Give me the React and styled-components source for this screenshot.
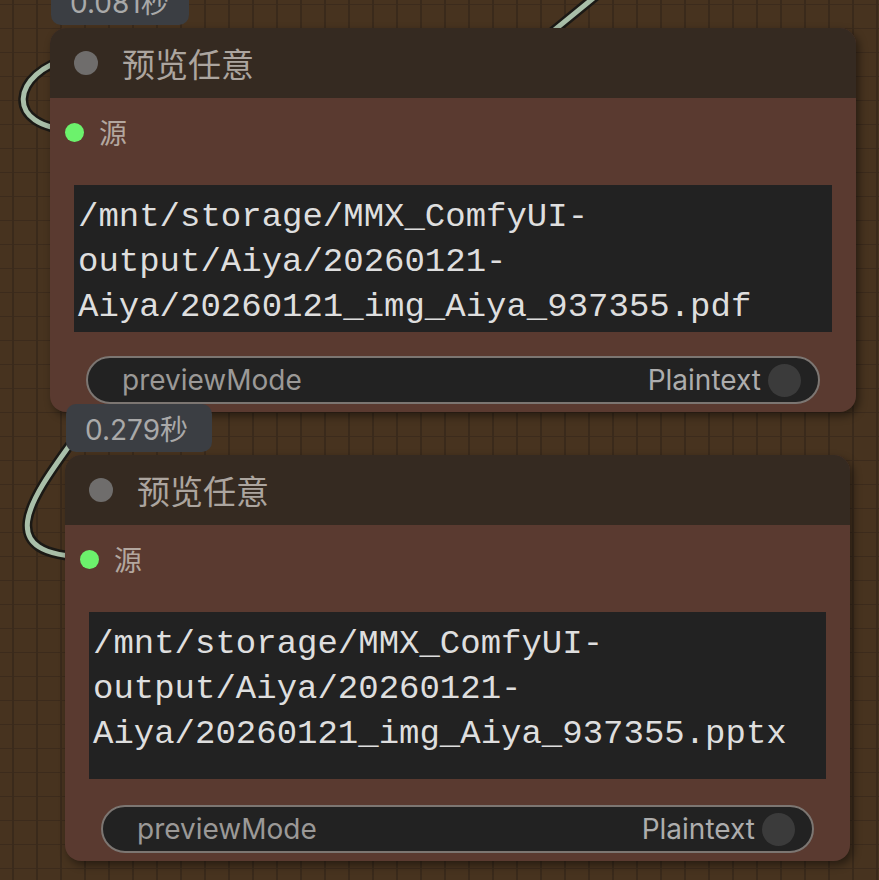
import styled, { createGlobalStyle } from 'styled-components';

const GlobalStyle = createGlobalStyle`
  html, body {
    margin: 0;
    padding: 0;
    background: #45311f;
  }
  * {
    box-sizing: border-box;
  }
`;

const Canvas = styled.div`
  position: relative;
  width: 879px;
  height: 880px;
  overflow: hidden;
  background-color: #47331f;
  background-image:
    linear-gradient(to right, #3a2a1b 2px, transparent 2px),
    linear-gradient(to bottom, #3c2b1c 1px, transparent 1px);
  background-size: 24px 24px;
  background-position: 12px 4px;
  font-family: Inter, "Noto Sans CJK SC", sans-serif;
`;

const Wires = styled.svg`
  position: absolute;
  left: 0;
  top: 0;
  width: 879px;
  height: 880px;
  overflow: visible;
`;

// nodes sit on a free canvas, so their place is the content
const Node = styled.div`
  position: absolute;
  left: ${(p) => p.x}px;
  top: ${(p) => p.y}px;
  width: ${(p) => p.w}px;
  display: flex;
  flex-direction: column;
  background: #5a3a30;
  border-radius: 16px;
  box-shadow: 3px 4px 8px rgba(0, 0, 0, 0.45);
  padding-bottom: 8px;
`;

const Badge = styled.div`
  position: absolute;
  left: ${(p) => p.dx}px;
  bottom: calc(100% + 3px);
  width: ${(p) => p.w}px;
  height: 48px;
  padding: 0 19px;
  display: flex;
  align-items: center;
  background: #3b3e43;
  border-radius: 10px;
  color: #a9a9a9;
  font-size: 28px;
`;

const TitleBar = styled.div`
  height: 70px;
  display: flex;
  align-items: center;
  gap: 24px;
  padding-left: 24px;
  background: #352a21;
  border-radius: 16px 16px 0 0;
  color: #aca59f;
  font-size: 33px;
`;

const Dot = styled.span`
  width: ${(p) => p.size}px;
  height: ${(p) => p.size}px;
  border-radius: 50%;
  background: ${(p) => p.color};
  flex: none;
`;

const SlotRow = styled.div`
  height: 68px;
  display: flex;
  align-items: center;
  gap: 15px;
  padding-left: 15px;
  color: #b3a79f;
  font-size: 28px;
`;

const TextBox = styled.div`
  margin: 19px 24px 0;
  height: ${(p) => p.h}px;
  padding: 10px 4px 0;
  background: #222222;
  color: #dedede;
  font-family: "Liberation Mono", monospace;
  font-size: 34px;
  line-height: 45px;
  white-space: pre;
  overflow: hidden;
`;

const Widget = styled.div`
  margin: ${(p) => p.gap}px 36px 0;
  height: 48px;
  display: flex;
  align-items: center;
  padding: 0 17px 0 34px;
  background: #222222;
  border: 2px solid #7c7672;
  border-radius: 24px;
  font-size: 28px;
`;

const WidgetLabel = styled.span`
  flex: 1;
  color: #9b9997;
`;

const WidgetValue = styled.span`
  color: #adadad;
  margin-right: 7px;
`;

const Toggle = styled.span`
  width: 33px;
  height: 33px;
  border-radius: 50%;
  background: #3b3b3b;
`;

const Wire = ({ d }) => (
  <g fill="none" strokeLinecap="round">
    <path d={d} stroke="#1b1915" strokeWidth="10" />
    <path d={d} stroke="#a9bfa9" strokeWidth="5" />
  </g>
);

const PreviewNode = ({ x, y, w, time, badgeW, lines, boxH, widgetGap }) => (
  <Node x={x} y={y} w={w}>
    <Badge dx={1} w={badgeW}>{time}</Badge>
    <TitleBar>
      <Dot size={24} color="#6f6d6c" />
      <span>预览任意</span>
    </TitleBar>
    <SlotRow>
      <Dot size={19} color="#6cf26c" />
      <span>源</span>
    </SlotRow>
    <TextBox h={boxH}>{lines.join('\n')}</TextBox>
    <Widget gap={widgetGap}>
      <WidgetLabel>previewMode</WidgetLabel>
      <WidgetValue>Plaintext</WidgetValue>
      <Toggle />
    </Widget>
  </Node>
);

export default function App() {
  return (
    <>
      <GlobalStyle />
      <Canvas>
        <Wires viewBox="0 0 879 880">
          <Wire d="M 640 -40 L 530 50 L 70 58 C 12 72, 2 128, 74 130" />
          <Wire d="M 110 380 L 72 442 C 30 500, -10 556, 89 557" />
        </Wires>
        <PreviewNode
          x={50}
          y={28}
          w={806}
          time="0.081秒"
          badgeW={138}
          boxH={147}
          widgetGap={24}
          lines={[
            '/mnt/storage/MMX_ComfyUI-',
            'output/Aiya/20260121-',
            'Aiya/20260121_img_Aiya_937355.pdf',
          ]}
        />
        <PreviewNode
          x={65}
          y={455}
          w={785}
          time="0.279秒"
          badgeW={146}
          boxH={167}
          widgetGap={26}
          lines={[
            '/mnt/storage/MMX_ComfyUI-',
            'output/Aiya/20260121-',
            'Aiya/20260121_img_Aiya_937355.pptx',
          ]}
        />
      </Canvas>
    </>
  );
}
